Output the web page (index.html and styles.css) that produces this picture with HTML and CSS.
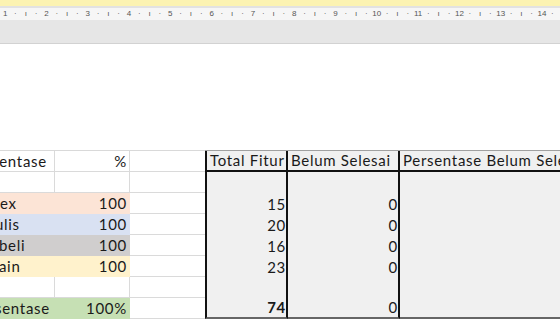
FILE: index.html
```html
<!DOCTYPE html>
<html>
<head>
    <title>Rekap Fitur</title>
    <link rel="stylesheet" href="styles.css">
</head>
<body>
    <div class="ribbon-edge"></div>
    <div class="ruler" id="ruler"></div>
    <div class="header-band"></div>

    <div class="page">
        <div class="sheet">
            <!-- row 1: headings -->
            <div class="cell">Persentase</div>
            <div class="cell num">%</div>
            <div class="cell last-plain"></div>
            <div class="cell box head first">Total Fitur</div>
            <div class="cell box head">Belum Selesai</div>
            <div class="cell box head wide">Persentase Belum Selesai</div>

            <!-- row 2 -->
            <div class="cell"></div>
            <div class="cell"></div>
            <div class="cell last-plain"></div>
            <div class="cell box first"></div>
            <div class="cell box"></div>
            <div class="cell box wide"></div>

            <div class="cell peach">Cortex</div>
            <div class="cell num peach">100</div>
            <div class="cell last-plain"></div>
            <div class="cell box num first">15</div>
            <div class="cell box num">0</div>
            <div class="cell box wide"></div>

            <div class="cell blue">Penulis</div>
            <div class="cell num blue">100</div>
            <div class="cell last-plain"></div>
            <div class="cell box num first">20</div>
            <div class="cell box num">0</div>
            <div class="cell box wide"></div>

            <div class="cell grey">Pembeli</div>
            <div class="cell num grey">100</div>
            <div class="cell last-plain"></div>
            <div class="cell box num first">16</div>
            <div class="cell box num">0</div>
            <div class="cell box wide"></div>

            <div class="cell yellow">Pemain</div>
            <div class="cell num yellow">100</div>
            <div class="cell last-plain"></div>
            <div class="cell box num first">23</div>
            <div class="cell box num">0</div>
            <div class="cell box wide"></div>

            <!-- row 7 -->
            <div class="cell"></div>
            <div class="cell"></div>
            <div class="cell last-plain"></div>
            <div class="cell box first"></div>
            <div class="cell box"></div>
            <div class="cell box wide"></div>

            <!-- row 8: totals -->
            <div class="cell green total-label">Persentase</div>
            <div class="cell num green">100%</div>
            <div class="cell last-plain"></div>
            <div class="cell box num first bottom strong">74</div>
            <div class="cell box num bottom">0</div>
            <div class="cell box wide bottom"></div>
        </div>
    </div>

    <script>
        const ruler = document.getElementById('ruler');
        for (let n = 1; n <= 14; n++) {
            const unit = document.createElement('div');
            unit.className = 'ruler-unit';
            unit.innerHTML = n < 14
                ? `<span>${n}</span><span>·</span><span>ı</span><span>·</span>`
                : `<span>${n}</span><span>·</span>`;
            ruler.appendChild(unit);
        }
    </script>
</body>
</html>
```

FILE: styles.css
```css
body {
    margin: 0;
    background: white;
    overflow: hidden;
    font-family: Lato, 'Liberation Sans', sans-serif;
    color: #1a1a1a;
}

.ribbon-edge {
    height: 6px;
    background: #fcf3b2;
    border-bottom: 2px solid #e2e2e2;
}

.ruler {
    display: flex;
    height: 12px;
    background: #f6f6f6;
    white-space: nowrap;
}

.ruler-unit {
    display: flex;
    flex: 0 0 41.3px;
}

.ruler-unit span {
    width: 10.3px;
    flex: none;
    text-align: center;
    font-family: 'Liberation Sans', sans-serif;
    font-size: 8px;
    line-height: 12px;
    color: #555;
}

.header-band {
    height: 23px;
    background: #e6e6e6;
    border-bottom: 1px solid #d2d2d2;
}

.page {
    padding-top: 106px;
}

.sheet {
    display: grid;
    grid-template-columns: 90px 75px 75px 83px 112px 200px;
    grid-auto-rows: 21px;
    margin-left: -35px;
    border-top: 1px solid #d9d9d9;
    font-size: 15px;
    letter-spacing: 0.7px;
}

.cell {
    box-sizing: border-box;
    display: flex;
    align-items: flex-end;
    padding: 0 2px 1px 3px;
    line-height: 18px;
    white-space: nowrap;
    overflow: hidden;
    border-right: 1px solid #dadada;
    border-bottom: 1px solid #dadada;
}

.num {
    justify-content: flex-end;
}

.last-plain {
    border-right: none;
}

.total-label {
    padding-left: 6px;
}

/* coloured rows on the left */
.peach { background: #fce4d6; border-color: #fce4d6; }
.blue { background: #d9e1f2; border-color: #d9e1f2; }
.grey { background: #d0cece; border-color: #d0cece; }
.yellow { background: #fff2cc; border-color: #fff2cc; }
.green { background: #c6e0b4; border-color: #c6e0b4; }

/* bordered block on the right */
.box {
    background: #f0f0f0;
    border-bottom: none;
    border-right: 2px solid #111;
    padding-right: 0;
}

.box.first {
    border-left: 2px solid #111;
}

.box.wide {
    border-right: none;
}

.box.head {
    border-bottom: 2px solid #111;
    box-shadow: 0 -1px 0 #a0a0a0;
    padding-left: 3px;
}

.box.bottom {
    border-bottom: 2px solid #666;
}

.strong {
    font-weight: bold;
}
```
